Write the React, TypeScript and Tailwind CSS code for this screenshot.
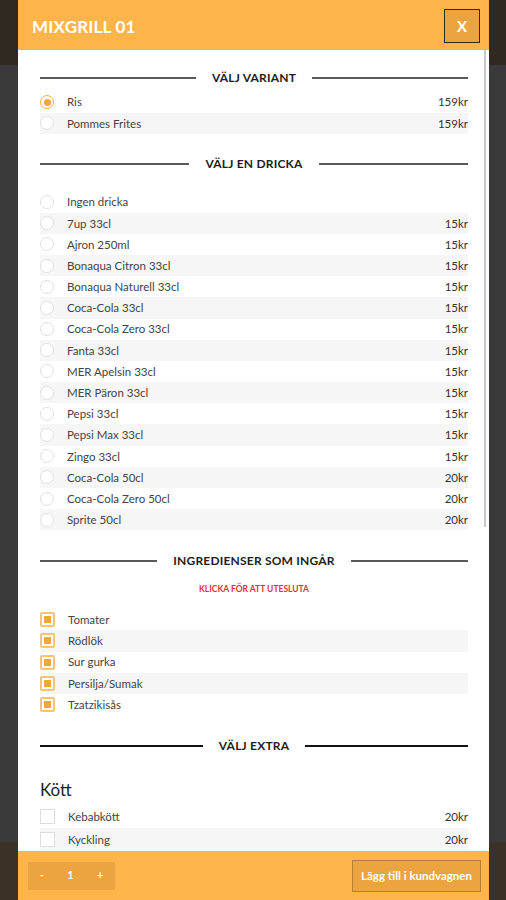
const variants = [
  { name: "Ris", price: "159kr", selected: true },
  { name: "Pommes Frites", price: "159kr" },
];

const drinks = [
  { name: "Ingen dricka", price: "" },
  { name: "7up 33cl", price: "15kr" },
  { name: "Ajron 250ml", price: "15kr" },
  { name: "Bonaqua Citron 33cl", price: "15kr" },
  { name: "Bonaqua Naturell 33cl", price: "15kr" },
  { name: "Coca-Cola 33cl", price: "15kr" },
  { name: "Coca-Cola Zero 33cl", price: "15kr" },
  { name: "Fanta 33cl", price: "15kr" },
  { name: "MER Apelsin 33cl", price: "15kr" },
  { name: "MER Päron 33cl", price: "15kr" },
  { name: "Pepsi 33cl", price: "15kr" },
  { name: "Pepsi Max 33cl", price: "15kr" },
  { name: "Zingo 33cl", price: "15kr" },
  { name: "Coca-Cola 50cl", price: "20kr" },
  { name: "Coca-Cola Zero 50cl", price: "20kr" },
  { name: "Sprite 50cl", price: "20kr" },
];

const ingredients = ["Tomater", "Rödlök", "Sur gurka", "Persilja/Sumak", "Tzatzikisås"];

const extras = [
  { name: "Kebabkött", price: "20kr" },
  { name: "Kyckling", price: "20kr" },
];

function SectionTitle({ title, dark }: { title: string; dark?: boolean }) {
  const line = dark ? "bg-[#111]" : "bg-[#5a5a5a]";
  return (
    <div className="flex h-[20px] items-center">
      <div className={`h-[2px] flex-1 ${line}`} />
      <span className="mx-[16px] text-[12px] font-bold uppercase tracking-[0.2px] text-[#1d1d1d]">{title}</span>
      <div className={`h-[2px] flex-1 ${line}`} />
    </div>
  );
}

function Radio({ on }: { on?: boolean }) {
  return on ? (
    <span className="flex h-[14px] w-[14px] shrink-0 items-center justify-center rounded-full border border-[#f6ad4e] bg-white">
      <span className="h-[7px] w-[7px] rounded-full bg-[#f3a53c]" />
    </span>
  ) : (
    <span className="h-[14px] w-[14px] shrink-0 rounded-full border border-[#e0e0e0] bg-white" />
  );
}

function Row({ index, children, price, tall }: { index: number; children: React.ReactNode; price?: string; tall?: boolean }) {
  return (
    <div
      className={`flex items-center ${tall ? "h-[23px]" : "h-[21.2px]"} ${index % 2 === 1 ? "bg-[#f6f6f6]" : "bg-white"}`}
    >
      {children}
      {price ? <span className="ml-auto text-[11.5px] text-[#333]">{price}</span> : null}
    </div>
  );
}

function Label({ text }: { text: string }) {
  return <span className="ml-[13px] text-[11.5px] text-[#444]">{text}</span>;
}

export default function App() {
  return (
    <div className="flex h-[900px] w-full overflow-hidden bg-[#3a3a3a] font-['Lato','Open_Sans',sans-serif]">
      <div className="flex w-[18px] shrink-0 flex-col">
        <div className="h-[65px] bg-[#2f2922]" />
        <div className="flex-1 bg-[#3a3a3a]" />
        <div className="h-[58px] bg-[#3b3126]" />
      </div>

      <div className="flex w-[471px] shrink-0 flex-col bg-white">
        <header className="flex h-[50px] shrink-0 items-center justify-between bg-[#fdb54b] pl-[14px] pr-[9px] pt-[2px]">
          <h1 className="mt-[2px] text-[17px] font-bold tracking-[0.2px] text-white">MIXGRILL 01</h1>
          <button className="flex h-[34px] w-[36px] items-center justify-center border-[1.5px] border-[#2e2a24] bg-[#eba43f] text-[15px] font-bold text-white">
            X
          </button>
        </header>

        <div className="flex min-h-0 flex-1 overflow-hidden">
          <div className="flex-1 pl-[22px] pr-[14px] pt-[18px]">
            <SectionTitle title="Välj variant" />
            <div className="mt-[3.5px]">
              {variants.map((v, i) => (
                <Row key={v.name} index={i} price={v.price}>
                  <Radio on={v.selected} />
                  <Label text={v.name} />
                </Row>
              ))}
            </div>

            <div className="mt-[20px]">
              <SectionTitle title="Välj en dricka" />
            </div>
            <div className="mt-[17.5px]">
              {drinks.map((d, i) => (
                <Row key={d.name} index={i} price={d.price}>
                  <Radio />
                  <Label text={d.name} />
                </Row>
              ))}
            </div>

            <div className="mt-[21px]">
              <SectionTitle title="Ingredienser som ingår" />
            </div>
            <p className="mt-[12px] text-center text-[8.5px] font-bold uppercase text-[#e8303a]">Klicka för att utesluta</p>
            <div className="mt-[13px]">
              {ingredients.map((name, i) => (
                <Row key={name} index={i}>
                  <span className="flex h-[15px] w-[15px] shrink-0 items-center justify-center rounded-[2px] border-2 border-[#fcc276] bg-white">
                    <span className="h-[7px] w-[7px] bg-[#f2a63e]" />
                  </span>
                  <Label text={name} />
                </Row>
              ))}
            </div>

            <div className="mt-[21px]">
              <SectionTitle title="Välj extra" dark />
            </div>
            <h2 className="mt-[22px] text-[17px] leading-[24px] text-[#1f1f1f]">Kött</h2>
            <div className="mt-[3px]">
              {extras.map((e, i) => (
                <Row key={e.name} index={i} price={e.price} tall>
                  <span className="h-[15px] w-[15px] shrink-0 border border-[#dedede] bg-white" />
                  <Label text={e.name} />
                </Row>
              ))}
            </div>
          </div>
          <div className="w-[7px] shrink-0 pl-[2px]">
            <div className="h-[477px] w-[2px] bg-[#c9c9c9]" />
          </div>
        </div>

        <footer className="flex h-[49px] shrink-0 items-center justify-between bg-[#fdb54b] pl-[10px] pr-[8px]">
          <div className="flex h-[28px] w-[87px] items-center justify-around bg-[#eba43f] text-[11px] font-bold text-white">
            <span>-</span>
            <span>1</span>
            <span>+</span>
          </div>
          <button className="h-[32px] w-[129px] border border-[#b67f35] bg-[#eba43f] text-[11.5px] font-bold text-white">
            Lägg till i kundvagnen
          </button>
        </footer>
      </div>

      <div className="flex flex-1 flex-col">
        <div className="h-[65px] bg-[#2f2922]" />
        <div className="flex-1 bg-[#3a3a3a]" />
        <div className="h-[58px] bg-[#3b3126]" />
      </div>
    </div>
  );
}
